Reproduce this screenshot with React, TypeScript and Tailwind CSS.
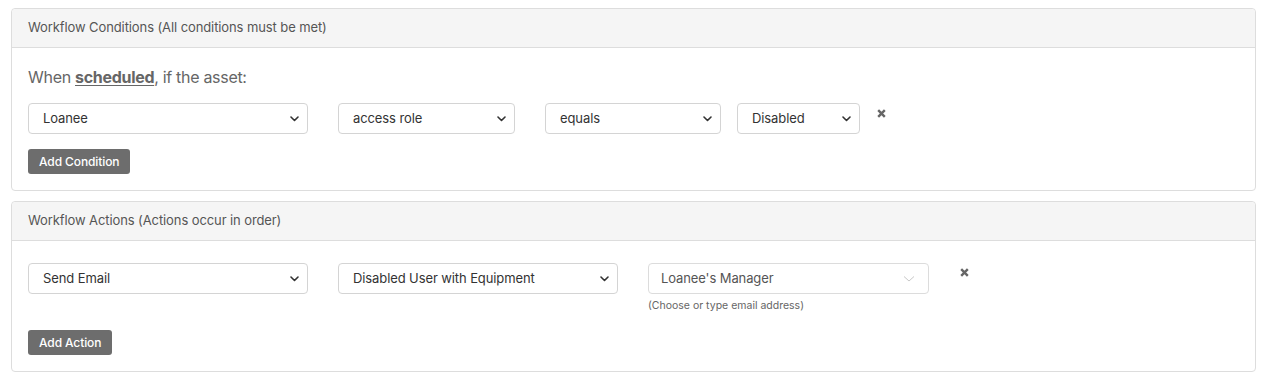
import React from "react";

function Chevron({ light = false }: { light?: boolean }) {
  return light ? (
    <svg width="12" height="8" viewBox="0 0 12 8" className="shrink-0">
      <path d="M1 1.5 L6 6 L11 1.5" fill="none" stroke="#c8c8c8" strokeWidth="1" />
    </svg>
  ) : (
    <svg width="9" height="6" viewBox="0 0 9 6" className="shrink-0">
      <path d="M1 1 L4.5 4.5 L8 1" fill="none" stroke="#333" strokeWidth="1.6" strokeLinecap="round" strokeLinejoin="round" />
    </svg>
  );
}

function Select({ label, w, light = false }: { label: string; w: string; light?: boolean }) {
  return (
    <div
      className={`${w} h-[31px] shrink-0 flex items-center justify-between rounded-[4px] border ${
        light ? "border-[#dcdcdc] pl-[12px] pr-[13px]" : "border-[#d4d4d4] pl-[14px] pr-[8px]"
      } bg-white text-[13px] tracking-[-0.1px] ${light ? "text-[#555]" : "text-[#333]"}`}
    >
      <span>{label}</span>
      <Chevron light={light} />
    </div>
  );
}

function XIcon() {
  return (
    <svg width="9" height="9" viewBox="0 0 9 9">
      <path d="M1.2 1.2 L7.8 7.8 M7.8 1.2 L1.2 7.8" stroke="#666" strokeWidth="2.4" strokeLinecap="butt" />
    </svg>
  );
}

function Panel({ title, children }: { title: string; children: React.ReactNode }) {
  return (
    <div className="border border-[#dddddd] rounded-[4px] bg-white">
      <div className="h-[39px] bg-[#f5f5f5] border-b border-[#dddddd] flex items-center px-[16px] text-[13px] tracking-[-0.1px] text-[#555] rounded-t-[4px]">
        {title}
      </div>
      {children}
    </div>
  );
}

export default function App() {
  return (
    <div
      className="w-[1263px] h-[380px] bg-white pl-[11px] pr-[7px] pt-[8px] flex flex-col gap-[10px]"
      style={{ fontFamily: "Inter, 'Liberation Sans', Arial, sans-serif" }}
    >
      <Panel title="Workflow Conditions (All conditions must be met)">
        <div className="px-[16px] pt-[18px] pb-[16px]">
          <div className="text-[16px] tracking-[-0.3px] text-[#666] leading-[22px]">
            When <span className="font-bold underline underline-offset-[2px]">scheduled</span>, if the asset:
          </div>
          <div className="flex items-start mt-[15px]">
            <Select label="Loanee" w="w-[280px]" />
            <div className="w-[30px]" />
            <Select label="access role" w="w-[177px]" />
            <div className="w-[30px]" />
            <Select label="equals" w="w-[176px]" />
            <div className="w-[16px]" />
            <Select label="Disabled" w="w-[123px]" />
            <div className="ml-[17px] mt-[6px]">
              <XIcon />
            </div>
          </div>
          <button className="mt-[15px] h-[25px] px-[11px] rounded-[3px] bg-[#6d6d6d] text-white text-[12px] font-medium tracking-[-0.1px]">
            Add Condition
          </button>
        </div>
      </Panel>
      <Panel title="Workflow Actions (Actions occur in order)">
        <div className="px-[16px] pt-[22px] pb-[16px]">
          <div className="flex items-start">
            <Select label="Send Email" w="w-[280px]" />
            <div className="w-[30px]" />
            <Select label="Disabled User with Equipment" w="w-[280px]" />
            <div className="w-[30px]" />
            <div className="flex flex-col">
              <Select label="Loanee's Manager" w="w-[281px]" light />
              <div className="text-[10.5px] text-[#666] mt-[5px] leading-[14px]">(Choose or type email address)</div>
            </div>
            <div className="ml-[31px] mt-[5px]">
              <XIcon />
            </div>
          </div>
          <button className="mt-[17px] h-[25px] px-[11px] rounded-[3px] bg-[#6d6d6d] text-white text-[12px] font-medium tracking-[-0.1px]">
            Add Action
          </button>
        </div>
      </Panel>
    </div>
  );
}
